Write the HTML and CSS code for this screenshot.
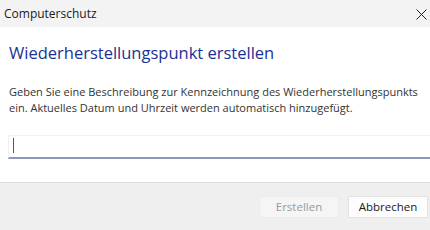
FILE: index.html
```html
<!DOCTYPE html>
<html lang="de">
<head>
<meta charset="utf-8">
<link rel="stylesheet" href="styles.css">
</head>
<body>
<div class="dialog">
  <div class="titlebar">
    <span class="title">Computerschutz</span>
    <svg class="close" width="11" height="11" viewBox="0 0 11 11"><path d="M0.5 0.5 L10.5 10.5 M10.5 0.5 L0.5 10.5" stroke="#222" stroke-width="1"/></svg>
  </div>
  <div class="content">
    <h1 class="heading">Wiederherstellungspunkt erstellen</h1>
    <p class="desc">Geben Sie eine Beschreibung zur Kennzeichnung des Wiederherstellungspunkts ein. Aktuelles Datum und Uhrzeit werden automatisch hinzugefügt.</p>
    <div class="input"><span class="caret"></span></div>
  </div>
  <div class="footer">
    <button class="btn disabled">Erstellen</button>
    <button class="btn">Abbrechen</button>
  </div>
</div>
</body>
</html>
```
FILE: styles.css
```css
html, body { margin: 0; padding: 0; }
body { width: 430px; height: 230px; overflow: hidden; font-family: "Open Sans", "Noto Sans", sans-serif; background: #fff; }
.dialog { display: flex; flex-direction: column; height: 230px; }
.titlebar { height: 27px; background: #f3f3f3; display: flex; align-items: center; justify-content: space-between; padding: 0 3px 0 4px; }
.title { font-size: 12px; color: #1a1a1a; }
.close { margin-top: 2px; }
.content { flex: 1; padding: 0 0 0 9px; display: flex; flex-direction: column; }
.heading { margin: 14px 0 0; font-size: 16.5px; font-weight: normal; color: #1a3294; line-height: 24px; }
.desc { margin: 19px 0 0; font-size: 11px; color: #333; line-height: 16px; width: 420px; }
.input { margin: 19px 0 0 -1px; height: 21px; border: 1px solid #f0f0f0; border-bottom: 2px solid #8a9ab8; border-right: none; position: relative; }
.caret { position: absolute; left: 4px; top: 2px; width: 1px; height: 15px; background: #555; }
.footer { flex: none; height: 47px; background: #efefef; border-top: 1px solid #dcdcdc; display: flex; justify-content: flex-end; align-items: center; gap: 9px; padding: 0 2px 0 0; }
.btn { width: 80px; height: 22px; font-family: inherit; font-size: 11.5px; border: 1px solid #e2e2e2; background: #fdfdfd; color: #1a1a1a; padding: 0; border-radius: 2px; }
.btn.disabled { background: #f5f5f5; color: #9a9a9a; border-color: #ececec; }
```
